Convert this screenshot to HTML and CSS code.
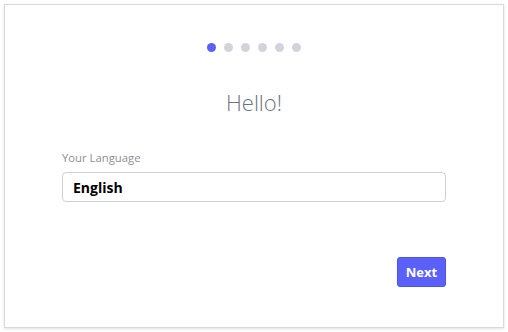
FILE: index.html
```html
<!DOCTYPE html>
<html lang="en">
<head>
    <meta charset="UTF-8">
    <meta name="viewport" content="width=device-width, initial-scale=1.0">
    <title>Welcome</title>
    <link rel="stylesheet" href="styles.css">
</head>
<body>
    <div class="wizard-card">
        <div class="steps">
            <span class="dot active"></span>
            <span class="dot"></span>
            <span class="dot"></span>
            <span class="dot"></span>
            <span class="dot"></span>
            <span class="dot"></span>
        </div>

        <h1 class="greeting">Hello!</h1>

        <div class="field">
            <label for="language">Your Language</label>
            <input type="text" id="language" value="English">
        </div>

        <div class="actions">
            <button class="next-button">Next</button>
        </div>
    </div>
</body>
</html>
```
FILE: styles.css
```css
/* Page */
body {
    margin: 0;
    padding: 4px;
    font-family: 'Open Sans', 'Noto Sans', sans-serif;
    background: #fff;
}

/* Card holding the wizard */
.wizard-card {
    box-sizing: border-box;
    width: 500px;
    height: 324px;
    border: 1px solid #d6d9de;
    box-shadow: 0 1px 3px rgba(0, 0, 0, 0.12);
    background: #fff;
    padding: 38px 57px 0 57px;
}

.steps {
    display: flex;
    justify-content: center;
    gap: 8px;
}

.dot {
    width: 9px;
    height: 9px;
    border-radius: 50%;
    background-color: #d1d5db;
}

.dot.active {
    background-color: #5b61f7;
}

.greeting {
    margin: 35px 0 0 0;
    text-align: center;
    font-size: 22px;
    font-weight: 300;
    line-height: 30px;
    color: #6b7280;
}

.field {
    margin-top: 33px;
    display: flex;
    flex-direction: column;
}

label {
    font-size: 11.3px;
    line-height: 16px;
    color: #8a8f98;
    margin-bottom: 6px;
}

input[type="text"] {
    box-sizing: border-box;
    height: 30px;
    padding: 0 10px;
    border: 1px solid #cdd1d6;
    border-radius: 4px;
    font-family: inherit;
    font-size: 14px;
    font-weight: 700;
    color: #000;
}

.actions {
    display: flex;
    justify-content: flex-end;
    margin-top: 55px;
}

.next-button {
    width: 49px;
    height: 30px;
    border: 1px solid #4e53e8;
    border-radius: 3px;
    background-color: #5b61f8;
    color: #fff;
    font-family: inherit;
    font-size: 13px;
    font-weight: 700;
    cursor: pointer;
    padding: 0;
}
```
